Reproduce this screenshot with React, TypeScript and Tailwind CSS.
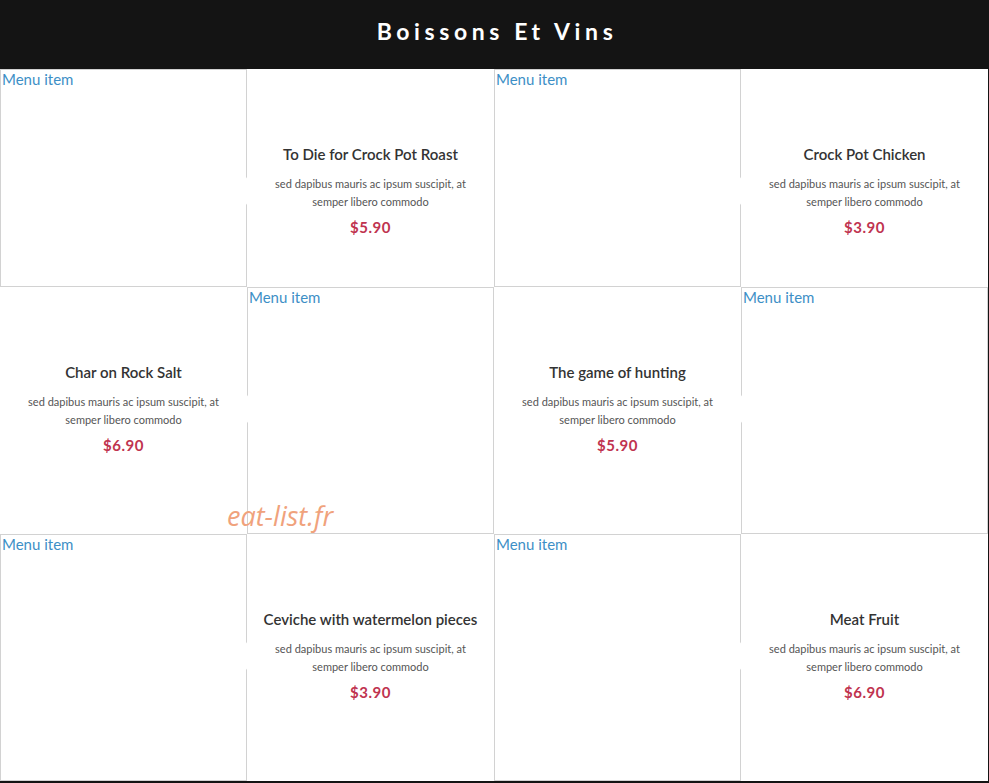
import React from "react";

type Cell =
  | { kind: "img" }
  | { kind: "text"; title: string; price: string; arrow: "left" | "right" };

const DESC = "sed dapibus mauris ac ipsum suscipit, at semper libero commodo";

const rows: { h: string; cells: Cell[] }[] = [
  {
    h: "h-[218px]",
    cells: [
      { kind: "img" },
      { kind: "text", title: "To Die for Crock Pot Roast", price: "$5.90", arrow: "left" },
      { kind: "img" },
      { kind: "text", title: "Crock Pot Chicken", price: "$3.90", arrow: "left" },
    ],
  },
  {
    h: "h-[247px]",
    cells: [
      { kind: "text", title: "Char on Rock Salt", price: "$6.90", arrow: "right" },
      { kind: "img" },
      { kind: "text", title: "The game of hunting", price: "$5.90", arrow: "right" },
      { kind: "img" },
    ],
  },
  {
    h: "h-[247px]",
    cells: [
      { kind: "img" },
      { kind: "text", title: "Ceviche with watermelon pieces", price: "$3.90", arrow: "left" },
      { kind: "img" },
      { kind: "text", title: "Meat Fruit", price: "$6.90", arrow: "left" },
    ],
  },
];

function ImgCell() {
  return (
    <div className="border border-[#d2d2d2] bg-white overflow-hidden">
      <div className="text-[15px] leading-[18px] text-[#3d8fc6] pl-px">Menu item</div>
    </div>
  );
}

function TextCell({ title, price, arrow }: { title: string; price: string; arrow: "left" | "right" }) {
  return (
    <div className="relative bg-white">
      {arrow === "left" ? (
        <div className="absolute left-[-10px] top-[108px] w-0 h-0 border-y-[14px] border-y-transparent border-r-[10px] border-r-white z-10" />
      ) : (
        <div className="absolute right-[-10px] top-[108px] w-0 h-0 border-y-[14px] border-y-transparent border-l-[10px] border-l-white z-10" />
      )}
      <div className="flex flex-col items-center text-center pt-[74px] px-[10px]">
        <div className="text-[15px] leading-[22px] font-semibold text-[#333] whitespace-nowrap">{title}</div>
        <div className="mt-[10px] px-[12px] text-[11px] leading-[18px] text-[#555]">{DESC}</div>
        <div className="mt-[5px] text-[15px] leading-[22px] font-bold text-[#c0334f] tracking-[0.5px]">{price}</div>
      </div>
    </div>
  );
}

export default function App() {
  return (
    <div className="relative w-[989px] h-[783px] bg-[#141414] overflow-hidden" style={{ fontFamily: "Lato, 'Open Sans', sans-serif" }}>
      <div className="h-[69px] bg-[#141414] flex justify-center pt-[17px]">
        <h1 className="text-white text-[23px] leading-[28px] font-bold tracking-[4.6px] pl-[5px]">Boissons Et Vins</h1>
      </div>
      <div className="flex flex-col w-[988px] bg-white">
        {rows.map((r, i) => (
          <div key={i} className={`grid grid-cols-4 ${r.h}`}>
            {r.cells.map((c, j) =>
              c.kind === "img" ? (
                <ImgCell key={j} />
              ) : (
                <TextCell key={j} title={c.title} price={c.price} arrow={c.arrow} />
              )
            )}
          </div>
        ))}
      </div>
      <div
        className="absolute left-[227px] top-[496px] text-[27px] italic text-[#f0a27c] z-20"
        style={{ fontFamily: "'Open Sans', sans-serif" }}
      >
        eat-list.fr
      </div>
    </div>
  );
}
